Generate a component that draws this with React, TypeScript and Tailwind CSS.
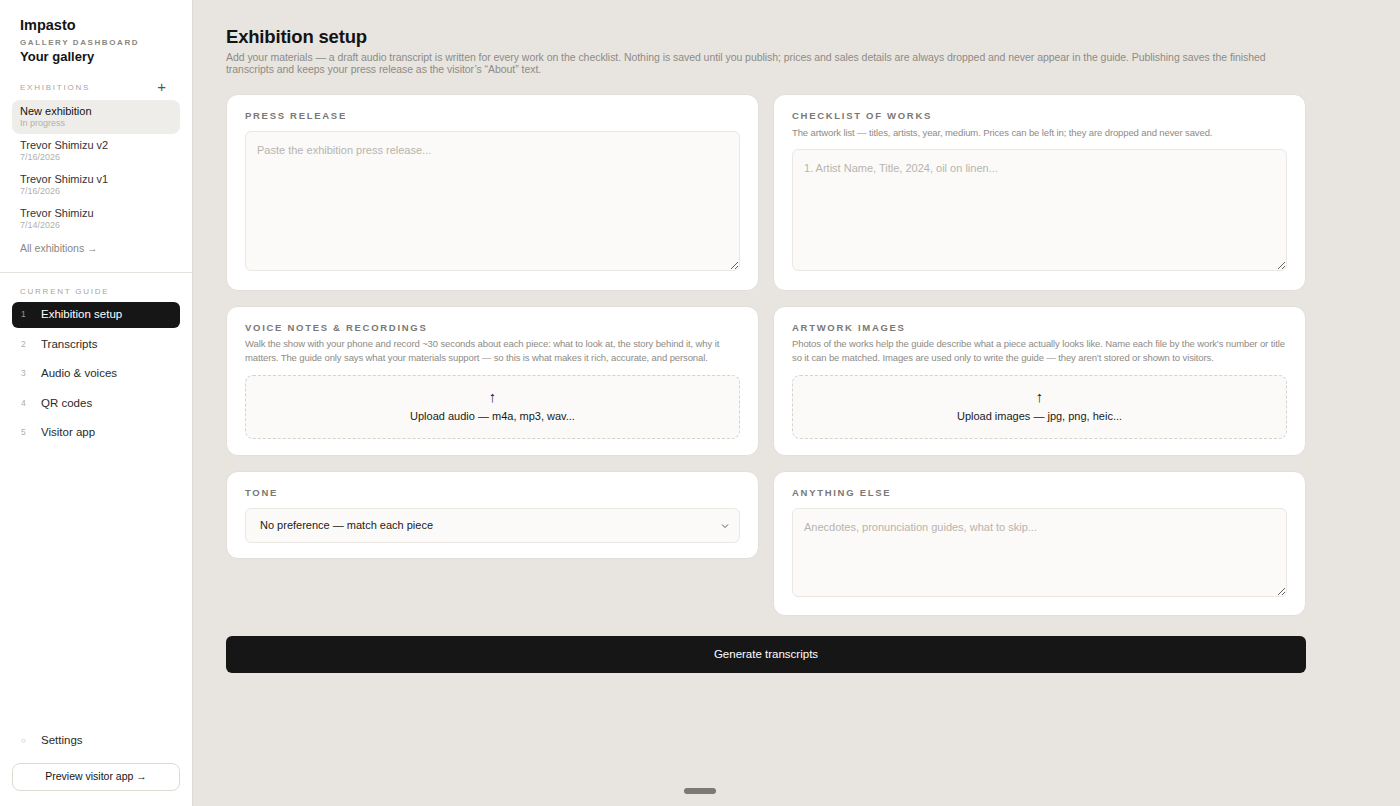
import React from 'react';

const exhibitions = [
  { name: 'New exhibition', sub: 'In progress', active: true },
  { name: 'Trevor Shimizu v2', sub: '7/16/2026' },
  { name: 'Trevor Shimizu v1', sub: '7/16/2026' },
  { name: 'Trevor Shimizu', sub: '7/14/2026' },
];

const steps = ['Exhibition setup', 'Transcripts', 'Audio & voices', 'QR codes', 'Visitor app'];

const Label: React.FC<{ children: React.ReactNode }> = ({ children }) => (
  <div className="text-[9.5px] leading-[12px] font-semibold tracking-[0.18em] text-[#7a7874] uppercase">{children}</div>
);

const Card: React.FC<{ children: React.ReactNode; pb: string }> = ({ children, pb }) => (
  <div className={`bg-white rounded-xl px-[18px] pt-[15px] border border-[#e2dfda] ${pb}`}>{children}</div>
);

const Dropzone: React.FC<{ text: string }> = ({ text }) => (
  <div className="mt-[10px] h-[64px] rounded-lg border border-dashed border-[#d6d3ce] bg-[#fbfaf8] flex flex-col items-center justify-center">
    <span className="text-[15px] leading-[14px] text-[#222]">↑</span>
    <span className="mt-[4px] text-[11px] text-[#1a1a1a]">{text}</span>
  </div>
);

const Hint: React.FC<{ children: React.ReactNode; className?: string }> = ({ children, className = '' }) => (
  <div className={`text-[9.5px] leading-[14px] tracking-[-0.012em] text-[#8e8b86] ${className}`}>{children}</div>
);

export default function App() {
  return (
    <div
      className="flex h-[806px] w-full bg-[#e8e5e0] text-[#141414] overflow-hidden relative"
      style={{ fontFamily: '"Liberation Sans", Arial, sans-serif' }}
    >
      {/* Sidebar */}
      <aside className="w-[193px] shrink-0 bg-white border-r border-[#dedad4] flex flex-col">
        <div className="px-5 pt-[16px]">
          <div className="text-[14.5px] font-semibold leading-[18px]">Impasto</div>
          <div className="mt-[3px] text-[8px] font-semibold tracking-[0.2em] text-[#8a8782]">GALLERY DASHBOARD</div>
          <div className="text-[13px] font-semibold leading-[16px]">Your gallery</div>
        </div>

        <div className="px-5 mt-[17px] h-[12px] flex items-center justify-between">
          <span className="text-[8px] tracking-[0.22em] text-[#a9a6a1]">EXHIBITIONS</span>
          <span className="text-[15px] leading-none text-[#555] mr-[6px] -mt-[3px]">+</span>
        </div>

        <div className="px-3 mt-[6px] flex flex-col">
          {exhibitions.map((e) => (
            <div
              key={e.name}
              className={`px-2 h-[34px] flex flex-col justify-center rounded-lg ${e.active ? 'bg-[#efede9]' : ''}`}
            >
              <span className={`text-[11px] leading-[13px] ${e.active ? 'text-[#141414]' : 'text-[#333]'}`}>{e.name}</span>
              <span className="text-[9px] leading-[11px] text-[#b3b0ab]">{e.sub}</span>
            </div>
          ))}
          <div className="px-2 mt-[5px] text-[10.5px] text-[#8a8782]">All exhibitions →</div>
        </div>

        <div className="mt-[15px] border-t border-[#e5e2dd]" />

        <div className="px-5 mt-[13px] text-[8px] tracking-[0.22em] text-[#a9a6a1]">CURRENT GUIDE</div>
        <div className="px-3 mt-[4px] flex flex-col gap-[3.5px]">
          {steps.map((s, i) => (
            <div
              key={s}
              className={`h-[26px] rounded-md flex items-center ${i === 0 ? 'bg-[#161616] text-white' : 'text-[#2a2a2a]'}`}
            >
              <span className={`w-[29px] pl-[9px] text-[8.5px] ${i === 0 ? 'text-[#9a9894]' : 'text-[#b0ada8]'}`}>{i + 1}</span>
              <span className="text-[11.5px]">{s}</span>
            </div>
          ))}
        </div>

        <div className="mt-auto px-3 pb-[15px]">
          <div className="h-[26px] flex items-center">
            <span className="w-[29px] pl-[9px] text-[8px] text-[#b0ada8]">○</span>
            <span className="text-[11.5px] text-[#2a2a2a]">Settings</span>
          </div>
          <button className="mt-[9px] w-full h-[28px] rounded-lg border border-[#dedad4] bg-white text-[10.5px] text-[#141414]">
            Preview visitor app →
          </button>
        </div>
      </aside>

      {/* Main */}
      <main className="flex-1 px-[33px] pt-[26px]">
        <div className="w-[1080px]">
          <h1 className="text-[18.5px] font-semibold leading-[22px] tracking-[-0.01em]">Exhibition setup</h1>
          <p className="mt-[3px] text-[10.5px] leading-[12px] text-[#8e8b86] tracking-[-0.005em] pr-[10px]">
            Add your materials — a draft audio transcript is written for every work on the checklist. Nothing is saved until you publish; prices and sales details are always dropped and never appear in the guide. Publishing saves the finished transcripts and keeps your press release as the visitor’s “About” text.
          </p>

          <div className="mt-[19px] grid grid-cols-2 gap-x-[14px] gap-y-[15px] items-start">
            <Card pb="pb-[19px]">
              <Label>Press release</Label>
              <textarea
                className="mt-[9px] block w-full h-[140px] rounded-md border border-[#ebe8e4] bg-[#fbfaf8] px-[11px] py-[10px] text-[11px] placeholder:text-[#b7b4af] outline-none"
                placeholder="Paste the exhibition press release..."
              />
            </Card>
            <Card pb="pb-[19px]">
              <Label>Checklist of works</Label>
              <Hint className="mt-[4px] leading-[12px]">
                The artwork list — titles, artists, year, medium. Prices can be left in; they are dropped and never saved.
              </Hint>
              <textarea
                className="mt-[9px] block w-full h-[122px] rounded-md border border-[#ebe8e4] bg-[#fbfaf8] px-[11px] py-[10px] text-[11px] placeholder:text-[#b7b4af] outline-none"
                placeholder="1. Artist Name, Title, 2024, oil on linen..."
              />
            </Card>

            <Card pb="pb-[16px]">
              <Label>Voice notes &amp; recordings</Label>
              <Hint className="mt-[3px]">
                Walk the show with your phone and record ~30 seconds about each piece: what to look at, the story behind it, why it matters. The guide only says what your materials support — so this is what makes it rich, accurate, and personal.
              </Hint>
              <Dropzone text="Upload audio — m4a, mp3, wav..." />
            </Card>
            <Card pb="pb-[16px]">
              <Label>Artwork images</Label>
              <Hint className="mt-[3px]">
                Photos of the works help the guide describe what a piece actually looks like. Name each file by the work’s number or title so it can be matched. Images are used only to write the guide — they aren’t stored or shown to visitors.
              </Hint>
              <Dropzone text="Upload images — jpg, png, heic..." />
            </Card>

            <Card pb="pb-[15px]">
              <Label>Tone</Label>
              <div className="mt-[9px] relative h-[35px] rounded-md border border-[#ebe8e4] bg-[#fbfaf8] flex items-center px-[14px]">
                <span className="text-[11px] text-[#1a1a1a]">No preference — match each piece</span>
                <svg className="absolute right-[10px] top-[14px]" width="8" height="6" viewBox="0 0 8 6" fill="none">
                  <path d="M1 1.5 L4 4.5 L7 1.5" stroke="#555" strokeWidth="1" />
                </svg>
              </div>
            </Card>
            <Card pb="pb-[18px]">
              <Label>Anything else</Label>
              <textarea
                className="mt-[9px] block w-full h-[89px] rounded-md border border-[#ebe8e4] bg-[#fbfaf8] px-[11px] py-[10px] text-[11px] placeholder:text-[#b7b4af] outline-none"
                placeholder="Anecdotes, pronunciation guides, what to skip..."
              />
            </Card>
          </div>

          <button className="mt-[20px] w-full h-[37px] rounded-md bg-[#161616] text-white text-[11.5px]">
            Generate transcripts
          </button>
        </div>
      </main>

      <div className="absolute left-[684px] top-[788px] w-[32px] h-[6px] rounded-full bg-[#7b7875]" />
    </div>
  );
}
